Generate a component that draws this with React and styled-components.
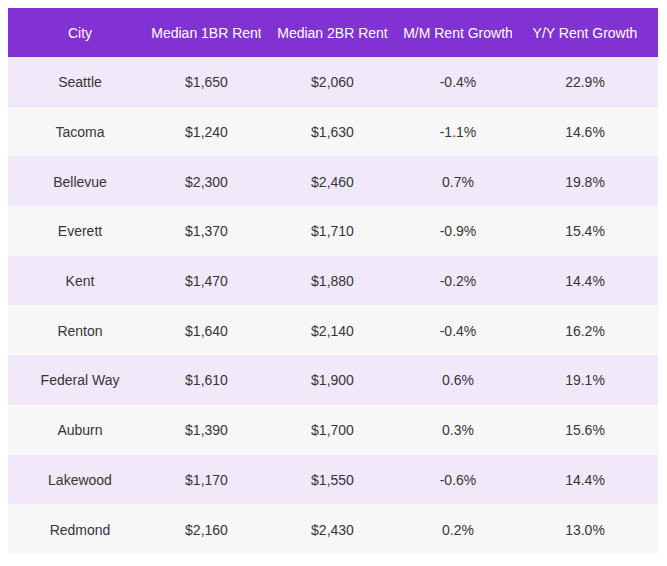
import React from 'react';
import styled, { createGlobalStyle } from 'styled-components';

const GlobalStyle = createGlobalStyle`
  body {
    margin: 8px;
    background: #fff;
    font-family: 'Liberation Sans', Arial, Helvetica, sans-serif;
  }
`

const Table = styled.div`
  width: 650px;
  display: grid;
  grid-template-columns: 144px 109px 143px 108px 1fr;
  font-size: 14px;
`

const Row = styled.div`
  display: contents;
`

const HeadCell = styled.div`
  height: 49px;
  display: flex;
  align-items: center;
  justify-content: center;
  white-space: nowrap;
  background: #8231d3;
  color: #fff;
  padding-top: 1px;
  box-sizing: border-box;
`

const Cell = styled.div`
  height: 49.7px;
  display: flex;
  align-items: center;
  justify-content: center;
  white-space: nowrap;
  color: #363636;
  padding-top: 1px;
  box-sizing: border-box;
  background: ${props => props.$alt ? '#f7f7f7' : '#f1e8f9'};
`

const headers = ['City', 'Median 1BR Rent', 'Median 2BR Rent', 'M/M Rent Growth', 'Y/Y Rent Growth'];

const rows = [
  ['Seattle', '$1,650', '$2,060', '-0.4%', '22.9%'],
  ['Tacoma', '$1,240', '$1,630', '-1.1%', '14.6%'],
  ['Bellevue', '$2,300', '$2,460', '0.7%', '19.8%'],
  ['Everett', '$1,370', '$1,710', '-0.9%', '15.4%'],
  ['Kent', '$1,470', '$1,880', '-0.2%', '14.4%'],
  ['Renton', '$1,640', '$2,140', '-0.4%', '16.2%'],
  ['Federal Way', '$1,610', '$1,900', '0.6%', '19.1%'],
  ['Auburn', '$1,390', '$1,700', '0.3%', '15.6%'],
  ['Lakewood', '$1,170', '$1,550', '-0.6%', '14.4%'],
  ['Redmond', '$2,160', '$2,430', '0.2%', '13.0%'],
];

const App = () => {
  return (
    <>
      <GlobalStyle />
      <Table>
        <Row>
          {headers.map(h => <HeadCell key={h}>{h}</HeadCell>)}
        </Row>
        {rows.map((r, i) => (
          <Row key={r[0]}>
            {r.map((v, j) => <Cell key={j} $alt={i % 2 === 1}>{v}</Cell>)}
          </Row>
        ))}
      </Table>
    </>
  )
}

export default App;
